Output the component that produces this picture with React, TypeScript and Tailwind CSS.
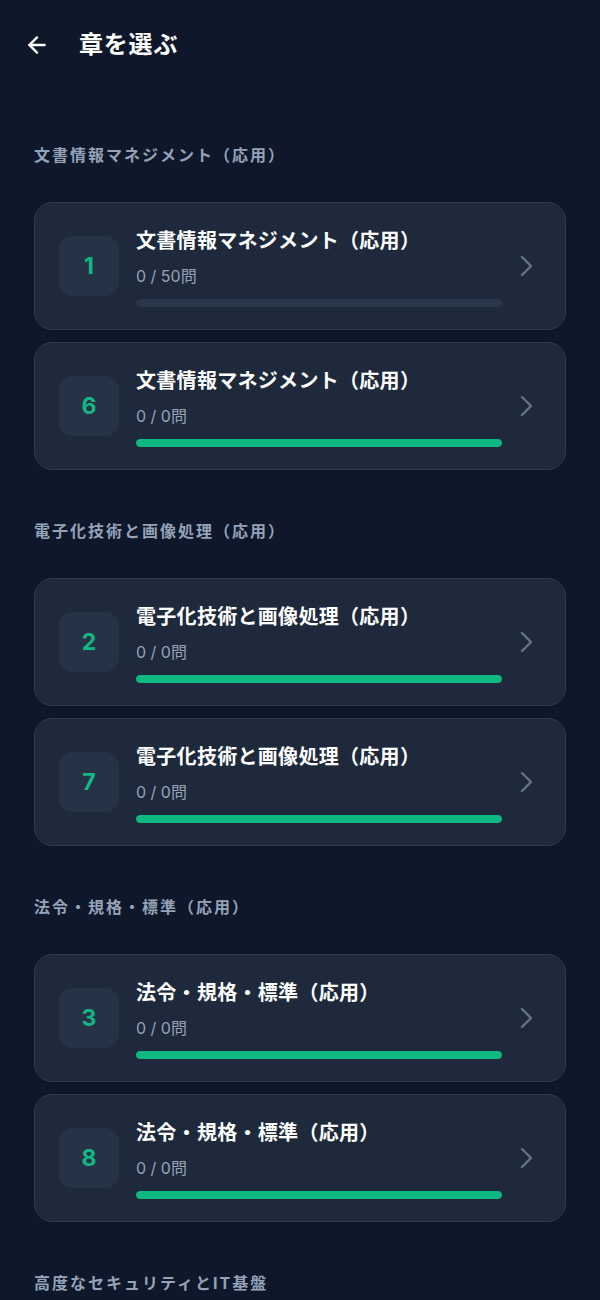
import React from "react";

type Chapter = { num: number; title: string; done: number; total: number };
type Section = { heading: string; chapters: Chapter[] };

const sections: Section[] = [
  {
    heading: "文書情報マネジメント（応用）",
    chapters: [
      { num: 1, title: "文書情報マネジメント（応用）", done: 0, total: 50 },
      { num: 6, title: "文書情報マネジメント（応用）", done: 0, total: 0 },
    ],
  },
  {
    heading: "電子化技術と画像処理（応用）",
    chapters: [
      { num: 2, title: "電子化技術と画像処理（応用）", done: 0, total: 0 },
      { num: 7, title: "電子化技術と画像処理（応用）", done: 0, total: 0 },
    ],
  },
  {
    heading: "法令・規格・標準（応用）",
    chapters: [
      { num: 3, title: "法令・規格・標準（応用）", done: 0, total: 0 },
      { num: 8, title: "法令・規格・標準（応用）", done: 0, total: 0 },
    ],
  },
  {
    heading: "高度なセキュリティとIT基盤",
    chapters: [],
  },
];

function ChapterCard({ c }: { c: Chapter }) {
  const pct = c.total === 0 ? 100 : (c.done / c.total) * 100;
  return (
    <div className="flex h-[128px] items-center rounded-[18px] border border-[#2d3a4f] bg-[#1e293b] pl-6 pr-[31px]">
      <div className="flex h-[60px] w-[60px] shrink-0 items-center justify-center rounded-[14px] bg-[#263347] text-[23px] font-bold text-[#10b981]">
        {c.num}
      </div>
      <div className="ml-[17px] flex min-w-0 flex-1 flex-col pt-[3px]">
        <div className="text-[20px] font-bold leading-[26px] tracking-[0.3px] text-white">{c.title}</div>
        <div className="mt-[11px] text-[16px] leading-[22px] text-[#94a3b8]">
          {c.done} / {c.total}問
        </div>
        <div className="mt-[12px] h-2 w-full overflow-hidden rounded-full bg-[#2a3649]">
          <div className="h-full rounded-full bg-[#10b981]" style={{ width: `${pct}%` }} />
        </div>
      </div>
      <svg className="ml-[18px] shrink-0" width="14" height="22" viewBox="0 0 14 22" fill="none">
        <polyline points="2,2 11,11 2,20" stroke="#64748b" strokeWidth="2.4" strokeLinecap="round" strokeLinejoin="round" />
      </svg>
    </div>
  );
}

export default function App() {
  return (
    <div
      className="min-h-[1300px] w-full bg-[#0f172a] text-white"
      style={{ fontFamily: '"Inter", "Noto Sans CJK JP", "Noto Sans", sans-serif' }}
    >
      <div className="flex h-[90px] items-center pl-6">
        <svg width="26" height="26" viewBox="0 0 24 24" fill="none" stroke="white" strokeWidth="2.2" strokeLinecap="round" strokeLinejoin="round">
          <path d="M19 12H5" />
          <path d="M12 19l-7-7 7-7" />
        </svg>
        <h1 className="ml-[29px] text-[24px] font-bold leading-none tracking-[0.8px] text-white">章を選ぶ</h1>
      </div>
      <div className="px-[34px]">
        {sections.map((s, i) => (
          <div key={i} className={i === 0 ? "pt-[54px]" : "pt-[50px]"}>
            <div className="text-[16px] font-bold leading-[22px] tracking-[2px] text-[#94a3b8]">{s.heading}</div>
            {s.chapters.length > 0 && (
              <div className="mt-[36px] flex flex-col gap-3">
                {s.chapters.map((c) => (
                  <ChapterCard key={c.num} c={c} />
                ))}
              </div>
            )}
          </div>
        ))}
      </div>
    </div>
  );
}
